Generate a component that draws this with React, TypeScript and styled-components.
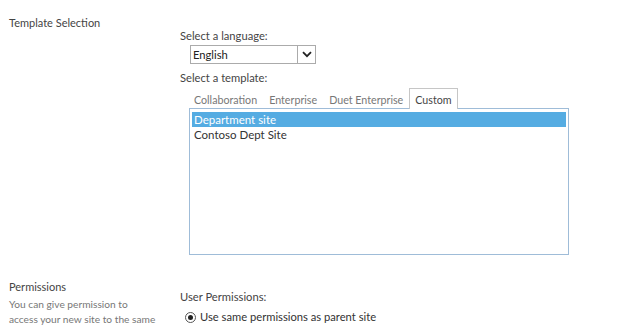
import React from 'react';
import styled, { createGlobalStyle } from 'styled-components';

const GlobalStyle = createGlobalStyle`
  html, body {
    margin: 0;
    padding: 0;
    background: #ffffff;
    overflow: hidden;
  }
  body {
    font-family: Lato, "Noto Sans", sans-serif;
    color: #444;
  }
`;

const Page = styled.div`
  width: 624px;
  height: 326px;
  overflow: hidden;
`;

const Section = styled.section<{ top: number }>`
  display: grid;
  grid-template-columns: 180px 1fr;
  padding-top: ${p => p.top}px;
`;

const SectionInfo = styled.div`
  padding-left: 9px;
`;

const SectionTitle = styled.div`
  font-size: 11px;
  line-height: 14px;
  color: #444;
`;

const SectionDesc = styled.div`
  margin-top: 3px;
  font-size: 10.2px;
  line-height: 15px;
  color: #777;
`;

const Fields = styled.div<{ top: number }>`
  padding-top: ${p => p.top}px;
  display: flex;
  flex-direction: column;
`;

const FieldLabel = styled.div<{ gap?: number }>`
  font-size: 11.2px;
  line-height: 14px;
  color: #444;
  margin-top: ${p => p.gap ?? 0}px;
`;

const Select = styled.div`
  margin: 2px 0 0 10px;
  width: 124px;
  height: 17px;
  border: 1px solid #ababab;
  display: flex;
  align-items: stretch;
`;

const SelectValue = styled.div`
  flex: 1;
  font-size: 11.2px;
  line-height: 17px;
  padding-left: 2px;
  color: #222;
`;

const SelectArrow = styled.div`
  width: 17px;
  border-left: 1px solid #ababab;
  display: flex;
  align-items: center;
  justify-content: center;
`;

const TabStrip = styled.div`
  margin-top: 3px;
  padding-left: 8px;
  display: flex;
  align-items: flex-end;
`;

const Tab = styled.div<{ active?: boolean }>`
  font-size: 10.7px;
  line-height: 14px;
  padding: 4px 5px 2px 5px;
  color: ${p => (p.active ? '#444' : '#777')};
  border: 1px solid ${p => (p.active ? '#c6c6c6' : 'transparent')};
  border-bottom: none;
  background: ${p => (p.active ? '#fff' : 'transparent')};
  margin-bottom: -1px;
  position: relative;
  z-index: 1;
`;

const ListBox = styled.div`
  margin-left: 9px;
  width: 380px;
  height: 147px;
  border: 1px solid #9fbcd8;
  box-sizing: border-box;
  padding: 3px 2px;
`;

const ListItem = styled.div<{ selected?: boolean }>`
  font-size: 11.5px;
  line-height: 15px;
  padding-left: 2px;
  color: ${p => (p.selected ? '#fff' : '#333')};
  background: ${p => (p.selected ? '#55ace2' : 'transparent')};
`;

const RadioRow = styled.label`
  display: flex;
  align-items: center;
  gap: 4px;
  margin: 6px 0 0 5px;
  font-size: 11.2px;
  line-height: 14px;
  color: #333;
`;

const RadioDot = styled.span`
  width: 9px;
  height: 9px;
  border: 1px solid #555;
  border-radius: 50%;
  display: flex;
  align-items: center;
  justify-content: center;
  &::after {
    content: '';
    width: 5px;
    height: 5px;
    border-radius: 50%;
    background: #222;
  }
`;

export default function App() {
  return (
    <Page>
      <GlobalStyle />
      <Section top={16}>
        <SectionInfo>
          <SectionTitle>Template Selection</SectionTitle>
        </SectionInfo>
        <Fields top={13}>
          <FieldLabel>Select a language:</FieldLabel>
          <Select>
            <SelectValue>English</SelectValue>
            <SelectArrow>
              <svg width="10" height="7" viewBox="0 0 10 7">
                <path d="M1 1.2 L5 5.2 L9 1.2" fill="none" stroke="#222" strokeWidth="1.8" />
              </svg>
            </SelectArrow>
          </Select>
          <FieldLabel gap={7}>Select a template:</FieldLabel>
          <TabStrip>
            <Tab>Collaboration</Tab>
            <Tab>Enterprise</Tab>
            <Tab>Duet Enterprise</Tab>
            <Tab active>Custom</Tab>
          </TabStrip>
          <ListBox>
            <ListItem selected>Department site</ListItem>
            <ListItem>Contoso Dept Site</ListItem>
          </ListBox>
        </Fields>
      </Section>
      <Section top={25}>
        <SectionInfo>
          <SectionTitle>Permissions</SectionTitle>
          <SectionDesc>
            You can give permission to
            <br />
            access your new site to the same
          </SectionDesc>
        </SectionInfo>
        <Fields top={10}>
          <FieldLabel>User Permissions:</FieldLabel>
          <RadioRow>
            <RadioDot />
            Use same permissions as parent site
          </RadioRow>
        </Fields>
      </Section>
    </Page>
  );
}
